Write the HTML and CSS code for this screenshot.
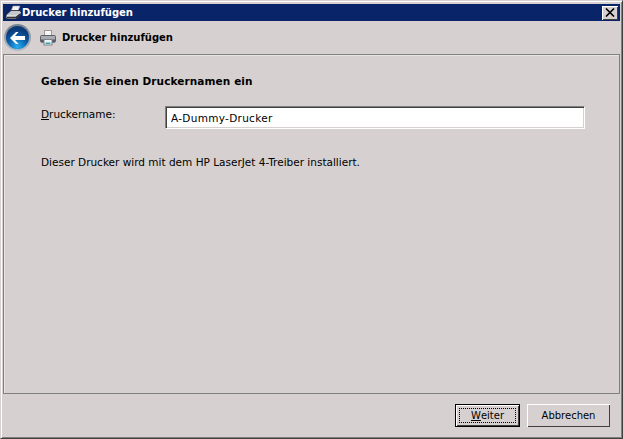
FILE: index.html
```html
<!DOCTYPE html>
<html lang="de">
<head>
    <meta charset="UTF-8">
    <meta name="viewport" content="width=device-width, initial-scale=1.0">
    <title>Drucker hinzufügen</title>
    <link rel="stylesheet" href="styles.css">
</head>
<body>
    <div class="window">
        <div class="titlebar">
            <svg class="title-icon" width="17" height="16" viewBox="0 0 17 16">
                <path d="M8 1 L15 1 L13 6 L6 6 Z" fill="#f4f4f4" stroke="#9a9a9a" stroke-width="0.6"/>
                <path d="M1 10 L6 5.5 L15 5.5 L16 7 L16 9.5 L11 14 L2 14 L1 12.5 Z" fill="#c3c7ce" stroke="#1c1e24" stroke-width="0.8"/>
                <path d="M2 11 L11 11 L15.5 7.5" fill="none" stroke="#f0f0f0" stroke-width="1"/>
                <path d="M2 12.5 L11 12.5 L15.5 9" fill="none" stroke="#30333a" stroke-width="1.6"/>
            </svg>
            <span class="title-text">Drucker hinzufügen</span>
            <button class="close-btn" aria-label="Schließen">
                <svg width="10" height="9" viewBox="0 0 10 9">
                    <path d="M1 0.5 L9 8.5 M9 0.5 L1 8.5" stroke="#000" stroke-width="1.6" fill="none"/>
                </svg>
            </button>
        </div>

        <div class="navbar">
            <svg class="back-btn" width="27" height="27" viewBox="0 0 27 27">
                <defs>
                    <radialGradient id="backFill" cx="50%" cy="90%" r="75%">
                        <stop offset="0" stop-color="#27aef0"/>
                        <stop offset="0.55" stop-color="#0b62ae"/>
                        <stop offset="1" stop-color="#0a3a78"/>
                    </radialGradient>
                    <linearGradient id="backRim" x1="0" y1="0" x2="0" y2="1">
                        <stop offset="0" stop-color="#75828f"/>
                        <stop offset="1" stop-color="#b4bcc4"/>
                    </linearGradient>
                </defs>
                <circle cx="13.5" cy="13.5" r="13.5" fill="url(#backRim)"/>
                <circle cx="13.5" cy="13.5" r="11.5" fill="url(#backFill)"/>
                <path d="M6 14 L12 8 L14.5 8 L11 12 L21 12 L21 16 L11 16 L14.5 20 L12 20 Z" fill="#fff"/>
            </svg>
            <svg class="nav-icon" width="16" height="16" viewBox="0 0 16 16">
                <rect x="4.5" y="0.5" width="7" height="5.5" fill="#f6f6f6" stroke="#9a9a9a"/>
                <rect x="0.5" y="5.5" width="15" height="6.5" rx="1" fill="#a9adb3" stroke="#5c6066"/>
                <rect x="1" y="9.5" width="14" height="3" fill="#585c63"/>
                <rect x="4" y="9.5" width="8" height="5.5" fill="#eef3f5" stroke="#7d8288"/>
                <rect x="5.5" y="12.5" width="5" height="1.5" fill="#3aa0b0"/>
            </svg>
            <span class="nav-title">Drucker hinzufügen</span>
        </div>

        <div class="panel">
            <h1 class="heading">Geben Sie einen Druckernamen ein</h1>
            <div class="name-row">
                <label class="name-label" for="printerName"><u>D</u>ruckername:</label>
                <input class="name-input" id="printerName" type="text" value="A-Dummy-Drucker">
            </div>
            <p class="hint">Dieser Drucker wird mit dem HP LaserJet 4-Treiber installiert.</p>
        </div>

        <div class="footer">
            <button class="btn btn-default"><span class="focus-box"><u>W</u>eiter</span></button>
            <button class="btn btn-cancel">Abbrechen</button>
        </div>
    </div>
</body>
</html>
```

FILE: styles.css
```css
* {
    box-sizing: border-box;
}
html, body {
    margin: 0;
    height: 100%;
}
body {
    font-family: "DejaVu Sans", sans-serif;
    font-size: 10.5px;
    color: #000;
    background: #d6d0d0;
}
.window {
    height: 439px;
    display: flex;
    flex-direction: column;
    padding: 3px 2px 2px 2px;
    background: #d6d0d0;
    border-top: 1px solid #d6d0d0;
    border-left: 1px solid #d6d0d0;
    border-right: 1px solid #404040;
    border-bottom: 1px solid #404040;
    box-shadow: inset 1px 1px 0 #fff, inset -1px -1px 0 #808080;
}
.titlebar {
    height: 17px;
    flex: none;
    display: flex;
    align-items: center;
    padding: 0 2px;
    font-size: 10px;
    background: #0a246a;
    color: #fff;
    font-weight: bold;
}
.title-icon {
    flex: none;
}
.title-text {
    flex: 1;
}
.close-btn {
    width: 16px;
    height: 14px;
    padding: 0;
    display: flex;
    align-items: center;
    justify-content: center;
    background: #d6d0d0;
    border: none;
    box-shadow: inset 1px 1px 0 #fff, inset -1px -1px 0 #404040;
}
.navbar {
    height: 33px;
    flex: none;
    display: flex;
    align-items: center;
    padding-left: 1px;
}
.nav-icon {
    margin-left: 9px;
    margin-right: 6px;
}
.nav-title {
    font-size: 10px;
    font-weight: bold;
}
.panel {
    flex: 1;
    padding: 20px 30px 20px 37px;
    border: 1px solid #808080;
    box-shadow: inset 1px 1px 0 #e8e4e4;
}
.heading {
    margin: 0;
    font-size: 10.5px;
    font-weight: bold;
    letter-spacing: 0.1px;
}
.name-row {
    display: flex;
    align-items: flex-start;
    margin-top: 19px;
}
.name-label {
    width: 124px;
    flex: none;
    padding-top: 2px;
}
.name-input {
    width: 420px;
    height: 23px;
    flex: none;
    padding: 0 5px;
    font: inherit;
    letter-spacing: 0.3px;
    background: #fff;
    border: 1px solid;
    border-color: #808080 #fff #fff #808080;
    box-shadow: inset 1px 1px 0 #404040, inset -1px -1px 0 #d6d0d0;
    outline: none;
}
.hint {
    margin: 27px 0 0;
}
.footer {
    height: 42px;
    flex: none;
    display: flex;
    justify-content: flex-end;
    align-items: center;
    gap: 7px;
    padding-right: 10px;
}
.btn {
    width: 65px;
    height: 23px;
    padding: 0;
    font-family: inherit;
    font-size: 10px;
    color: #000;
    background: #d6d0d0;
    border: none;
    box-shadow: inset 1px 1px 0 #fff, inset -1px -1px 0 #404040;
}
.btn-cancel {
    width: 83px;
}
.btn-default {
    border: 1px solid #000;
    padding: 3px;
}
.focus-box {
    display: flex;
    align-items: center;
    justify-content: center;
    height: 100%;
    border: 1px dotted #000;
}
```
